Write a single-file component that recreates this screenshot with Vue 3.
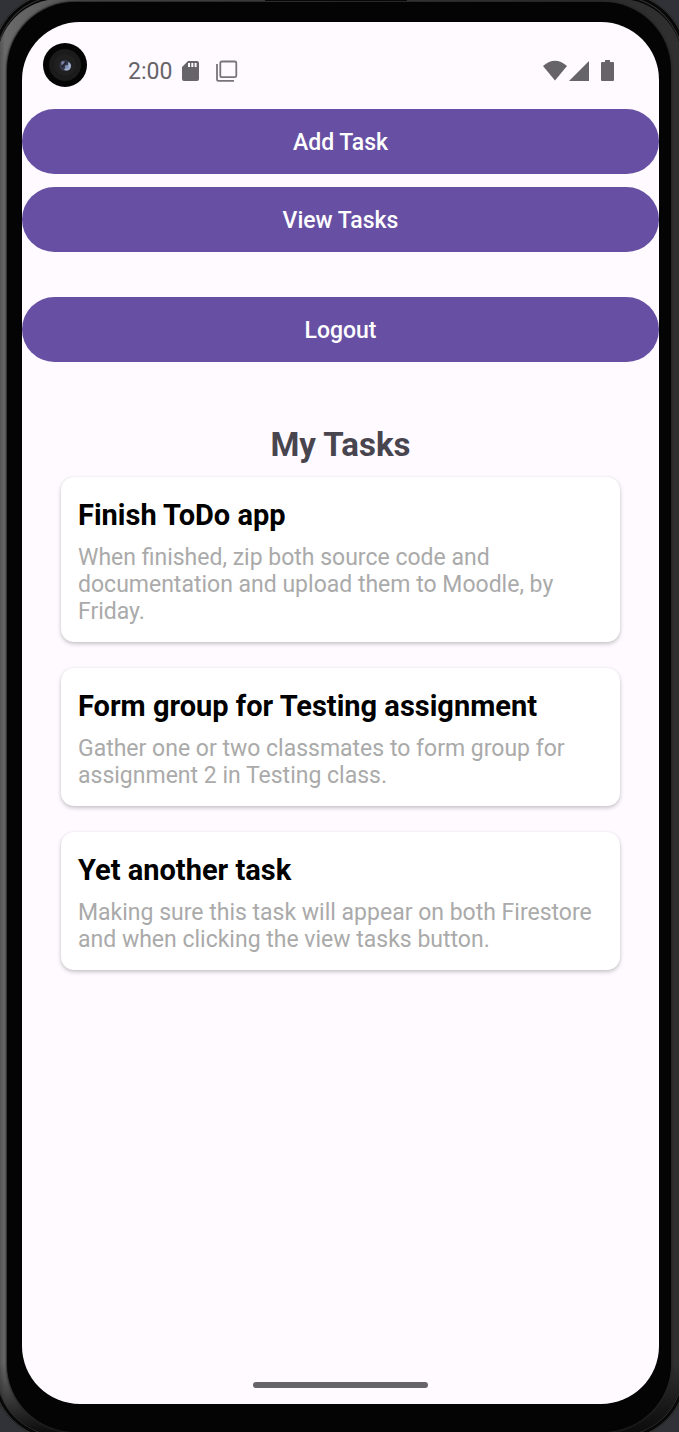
<script setup>
const tasks = [
  {
    title: 'Finish ToDo app',
    text: 'When finished, zip both source code and documentation and upload them to Moodle, by Friday.',
  },
  {
    title: 'Form group for Testing assignment',
    text: 'Gather one or two classmates to form group for assignment 2 in Testing class.',
  },
  {
    title: 'Yet another task',
    text: 'Making sure this task will appear on both Firestore and when clicking the view tasks button.',
  },
]
</script>

<template>
  <div class="phone">
    <div class="shell rim"></div>
    <div class="shell metal"></div>
    <div class="shell bezel"></div>
    <div class="speaker"></div>
    <main class="screen">
      <header class="status">
        <svg class="camera" viewBox="0 0 44 44" width="44" height="44" aria-hidden="true">
          <circle cx="22" cy="22" r="22" fill="#040404" />
          <circle cx="22" cy="22" r="16" fill="#1b1b1b" />
          <circle cx="22" cy="22" r="11" fill="#202020" />
          <circle cx="22" cy="22.500" r="5.500" fill="#34374a" />
          <path d="M25 19c3 1 4 4 2 7-2 2-5 2-6 0 3-1 5-3 4-7z" fill="#a3b2d2" />
          <circle cx="24" cy="24" r="2" fill="#8794b8" />
          <circle cx="20" cy="20" r="2" fill="#767e9f" />
          <path d="M19 24l4-5" stroke="#20212d" stroke-width="1.5" />
        </svg>
        <span class="time">2:00</span>
        <svg class="sd" viewBox="0 0 17 20" width="17" height="20" aria-hidden="true">
          <path fill="#676469" fill-rule="evenodd" d="M6 0h9a2 2 0 0 1 2 2v16a2 2 0 0 1-2 2H2a2 2 0 0 1-2-2V6zM6 2v4h2V2zM9.300 2v4h2V2zM12.600 2v4h2V2z" />
        </svg>
        <svg class="copy" viewBox="0 0 22 22" width="22" height="22" fill="none" stroke="#77747a" stroke-width="1.800" aria-hidden="true">
          <rect x="4.300" y="1.500" width="16" height="15.700" rx="1.500" />
          <path d="M1 4v15.500a1.300 1.300 0 0 0 1.300 1.300H18" />
        </svg>
        <span class="spacer"></span>
        <svg viewBox="0 0 72 22" width="72" height="22" fill="#676469" aria-hidden="true">
          <path d="M0 6Q12-4.500 24 6L12 20.500z" />
          <path d="M46 1v20H26z" />
          <path d="M62 0h5v2h3a1 1 0 0 1 1 1v17a1 1 0 0 1-1 1H59a1 1 0 0 1-1-1V3a1 1 0 0 1 1-1h3z" />
        </svg>
      </header>

      <nav class="actions">
        <button type="button">Add Task</button>
        <button type="button">View Tasks</button>
        <button type="button" class="logout">Logout</button>
      </nav>

      <section class="tasks">
        <h1>My Tasks</h1>
        <article v-for="task in tasks" :key="task.title" class="card">
          <h2>{{ task.title }}</h2>
          <p>{{ task.text }}</p>
        </article>
      </section>

      <div class="home"></div>
    </main>
  </div>
</template>

<style>
body {
  margin: 0;
  background: #303238;
}
</style>

<style scoped>
.phone {
  position: relative;
  box-sizing: border-box;
  display: flex;
  min-height: 100vh;
  padding: 22px 20px 28px 22px;
  overflow: hidden;
  background: #303238;
  font-family: Roboto, "Liberation Sans", sans-serif;
}

.shell {
  position: absolute;
}

.rim {
  inset: -8px;
  border-radius: 68px;
  background: #050505;
  box-shadow: inset 0 0 0 1px #3a3a3a, inset 0 0 0 4px #080808, inset 0 0 0 5px #333;
}

.metal {
  inset: -1px -3px -3px;
  border-radius: 62px;
  background:
    linear-gradient(180deg, transparent 95%, #0a0a0a),
    linear-gradient(90deg, #484848, #6a6a6a 8px, #4c4c4c 14%, #2c2c2c 86%, #303030);
}

.bezel {
  inset: 2px 8px 0 7px;
  border-radius: 68px;
  background: #040404;
  box-shadow: 0 0 2px 1px #242424;
}

.speaker {
  position: absolute;
  top: 0;
  left: 50%;
  width: 142px;
  height: 1px;
  margin-left: -75px;
  background: #080808;
}

.screen {
  position: relative;
  display: flex;
  flex: 1;
  flex-direction: column;
  min-width: 0;
  border-radius: 58px;
  background: #fefaff;
}

.status {
  display: flex;
  box-sizing: border-box;
  height: 87px;
  padding: 21px 44px 0 21px;
}

.time {
  margin: 15px 10px 0 41px;
  color: #676469;
  font-size: 23px;
  line-height: 28px;
}

.status svg {
  flex: none;
  margin-top: 17px;
}

.status .camera {
  margin-top: 0;
}

.status .sd {
  margin-top: 18px;
}

.status .copy {
  margin-left: 17px;
}

.spacer {
  flex: 1;
}

.actions {
  display: flex;
  flex-direction: column;
  gap: 13px;
}

button {
  height: 65px;
  padding: 2px 0 0;
  border: 0;
  border-radius: 33px;
  background: #6750a3;
  color: #fff;
  font: 500 23px/28px Roboto, "Liberation Sans", sans-serif;
}

.logout {
  margin-top: 32px;
}

.tasks {
  display: flex;
  flex-direction: column;
  gap: 26px;
  padding: 63px 39px 0;
}

h1 {
  margin: 0 0 -14px;
  color: #49454f;
  font-size: 33px;
  font-weight: 700;
  line-height: 40px;
  text-align: center;
}

.card {
  padding: 17px;
  border-radius: 13px;
  background: #fff;
  box-shadow: 0 2px 4px rgba(0, 0, 0, 0.22), 0 0 2px rgba(0, 0, 0, 0.06);
}

h2 {
  margin: 0 0 8px;
  color: #000;
  font-size: 29px;
  font-weight: 700;
  line-height: 42px;
}

p {
  margin: 0;
  color: #aaa;
  font-size: 23px;
  line-height: 27px;
}

.home {
  width: 175px;
  height: 6px;
  margin: auto auto 16px;
  border-radius: 3px;
  background: #676469;
}
</style>
